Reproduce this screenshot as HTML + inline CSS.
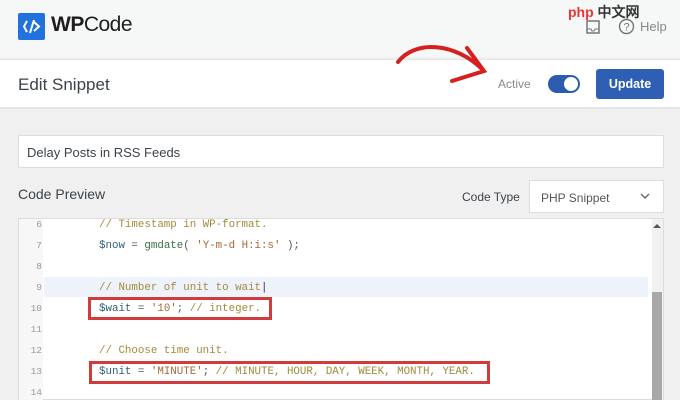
<!DOCTYPE html>
<html><head><style>
*{margin:0;padding:0;box-sizing:border-box}
body{width:680px;height:400px;overflow:hidden;background:#f0f0f1;font-family:"Liberation Sans",sans-serif;position:relative}
.abs{position:absolute}
.code{font-family:"Liberation Mono",monospace;font-size:10.8px;white-space:pre}
.ln{position:absolute;left:18px;width:24px;text-align:right;font-family:"Liberation Mono",monospace;font-size:9.5px;color:#999}
.c{color:#a28a3a}.v{color:#2d5f7a}.s{color:#a5683a}.f{color:#3a6e40}.p{color:#555}
</style></head><body>
<div class="abs" style="left:0;top:0;width:680px;height:57px;background:#f6f7f7"></div>
<div class="abs" style="left:18px;top:13px;width:27px;height:27px;background:#2271e0;border-radius:2px"></div>
<svg class="abs" style="left:18px;top:13px" width="27" height="27"><path d="M9 8 L6 13.5 L9 19" stroke="#fff" stroke-width="2" fill="none"/><path d="M16 7 L12 20" stroke="#fff" stroke-width="2"/><path d="M16 9 L21 13.5 L16 18" stroke="#fff" stroke-width="2" fill="none"/></svg>
<div class="abs" style="left:51px;top:13px;font-size:21px;color:#1e1e1e;letter-spacing:-0.5px"><b>WP</b>Code</div>
<svg class="abs" style="left:585px;top:19px" width="16" height="16"><rect x="2" y="2" width="12" height="12" fill="none" stroke="#777" stroke-width="1.5"/><path d="M2 10h4l1 2h2l1-2h4" stroke="#777" fill="none"/></svg>
<svg class="abs" style="left:618px;top:18px" width="17" height="17"><circle cx="8.5" cy="8.5" r="7" fill="none" stroke="#777" stroke-width="1.4"/><text x="8.5" y="12.5" font-size="11" text-anchor="middle" fill="#777" font-family="Liberation Sans">?</text></svg>
<div class="abs" style="left:640px;top:19px;font-size:13px;color:#888">Help</div>
<div class="abs" style="left:568px;top:2px;font-size:14px;color:#e33;font-weight:bold">php <span style="color:#333">中文网</span></div>
<div class="abs" style="left:0;top:59px;width:680px;height:50px;background:#fff;border-bottom:2px solid #e5e5e5;border-top:1px solid #e5e5e5"></div>
<div class="abs" style="left:18px;top:75px;font-size:17px;color:#3c434a">Edit Snippet</div>
<svg class="abs" style="left:395px;top:40px" width="100" height="50"><path d="M3 22 C20 0,60 2,88 30" stroke="#d62020" stroke-width="4" fill="none" stroke-linecap="round"/><path d="M72 8 L89 31 L57 41" stroke="#d62020" stroke-width="4" fill="none" stroke-linecap="round"/></svg>
<div class="abs" style="left:498px;top:77px;font-size:12px;color:#888">Active</div>
<div class="abs" style="left:548px;top:75px;width:32px;height:18px;background:#2b5cad;border-radius:9px"></div>
<div class="abs" style="left:564px;top:77px;width:14px;height:14px;background:#fff;border-radius:7px"></div>
<div class="abs" style="left:596px;top:69px;width:68px;height:30px;background:#2f5fb5;border-radius:3px;color:#fff;font-size:12.5px;font-weight:bold;text-align:center;line-height:30px">Update</div>
<div class="abs" style="left:18px;top:135px;width:646px;height:33px;background:#fff;border:1px solid #ddd;border-radius:2px;font-size:13px;color:#3c434a;padding:9px 0 0 8px">Delay Posts in RSS Feeds</div>
<div class="abs" style="left:18px;top:186px;font-size:14px;color:#3c434a">Code Preview</div>
<div class="abs" style="left:462px;top:190px;font-size:12px;color:#3c434a">Code Type</div>
<div class="abs" style="left:529px;top:180px;width:135px;height:33px;background:#fff;border:1px solid #ddd;font-size:12px;color:#555;padding:10px 0 0 11px">PHP Snippet</div>
<svg class="abs" style="left:640px;top:192px" width="10" height="8"><path d="M1 2 L5 6 L9 2" stroke="#666" stroke-width="1.4" fill="none"/></svg>
<div class="abs" style="left:18px;top:218px;width:646px;height:182px;background:#fff;border:1px solid #ddd"></div>
<div class="abs" style="left:19px;top:219px;width:24px;height:181px;background:#f7f7f7"></div>
<div class="abs" style="left:44px;top:277px;width:604px;height:20px;background:#eef3fb"></div>
<div class="abs" style="left:652px;top:219px;width:11px;height:181px;background:#f1f1f1"></div>
<div class="abs" style="left:652px;top:292px;width:10px;height:108px;background:#a8a8a8"></div>
<svg class="abs" style="left:653px;top:224px" width="8" height="5"><path d="M4 0 L8 4 H0Z" fill="#555"/></svg>
<div class="ln" style="top:219px">6</div><div class="ln" style="top:240px">7</div><div class="ln" style="top:261px">8</div><div class="ln" style="top:282px">9</div><div class="ln" style="top:303px">10</div><div class="ln" style="top:324px">11</div><div class="ln" style="top:345px">12</div><div class="ln" style="top:366px">13</div><div class="ln" style="top:387px">14</div>
<div class="abs code c" style="left:99px;top:219px">// Timestamp in WP-format.</div>
<div class="abs code" style="left:99px;top:240px"><span class="v">$now</span><span class="p"> = </span><span class="f">gmdate</span><span class="p">( </span><span class="s">'Y-m-d H:i:s'</span><span class="p"> );</span></div>
<div class="abs code c" style="left:99px;top:282px">// Number of unit to wait<span style="color:#333">|</span></div>
<div class="abs code" style="left:99px;top:303px"><span class="v">$wait</span><span class="p"> = </span><span class="s">'10'</span><span class="p">; </span><span class="c">// integer.</span></div>
<div class="abs code c" style="left:99px;top:345px">// Choose time unit.</div>
<div class="abs code" style="left:99px;top:366px"><span class="v">$unit</span><span class="p"> = </span><span class="s">'MINUTE'</span><span class="p">; </span><span class="c">// MINUTE, HOUR, DAY, WEEK, MONTH, YEAR.</span></div>
<div class="abs" style="left:88px;top:297px;width:184px;height:23px;border:3px solid #d23b3b"></div>
<div class="abs" style="left:89px;top:361px;width:401px;height:23px;border:3px solid #d23b3b"></div>
</body></html>
